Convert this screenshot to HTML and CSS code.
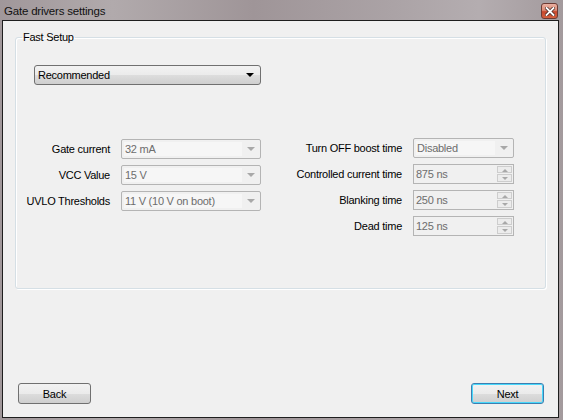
FILE: index.html
```html
<!DOCTYPE html>
<html lang="en">
<head>
<meta charset="UTF-8">
<meta name="viewport" content="width=device-width, initial-scale=1.0">
<title>Gate drivers settings</title>
<link rel="stylesheet" href="styles.css">
</head>
<body>
    <div class="window">
        <div class="titlebar">
            <span class="title">Gate drivers settings</span>
            <span class="close">
                <svg width="10" height="9" viewBox="0 0 10 9">
                    <path d="M1.5 1 L8.5 8 M8.5 1 L1.5 8" stroke="#4a2a24" stroke-width="3.4" stroke-linecap="square"/>
                    <path d="M1.5 1 L8.5 8 M8.5 1 L1.5 8" stroke="#ffffff" stroke-width="1.8" stroke-linecap="square"/>
                </svg>
            </span>
        </div>
        <div class="client">
            <fieldset class="group">
                <legend>Fast Setup</legend>
                <div class="group-body">
                    <div class="select">
                        <span>Recommended</span>
                        <span class="arrow"></span>
                    </div>

                    <div class="fields">
                        <div class="column left">
                            <label>Gate current</label>
                            <div class="combo"><span class="value">32 mA</span><span class="arrow"></span></div>
                            <label>VCC Value</label>
                            <div class="combo"><span class="value">15 V</span><span class="arrow"></span></div>
                            <label>UVLO Thresholds</label>
                            <div class="combo"><span class="value">11 V (10 V on boot)</span><span class="arrow"></span></div>
                        </div>
                        <div class="column right">
                            <label>Turn OFF boost time</label>
                            <div class="combo"><span class="value">Disabled</span><span class="arrow"></span></div>
                            <label>Controlled current time</label>
                            <div class="spin"><span class="value">875 ns</span><span class="spin-btns"><span class="up"></span><span class="down"></span></span></div>
                            <label>Blanking time</label>
                            <div class="spin"><span class="value">250 ns</span><span class="spin-btns"><span class="up"></span><span class="down"></span></span></div>
                            <label>Dead time</label>
                            <div class="spin"><span class="value">125 ns</span><span class="spin-btns"><span class="up"></span><span class="down"></span></span></div>
                        </div>
                    </div>
                </div>
            </fieldset>

            <div class="footer">
                <button class="btn">Back</button>
                <button class="btn default">Next</button>
            </div>
        </div>
    </div>
</body>
</html>
```
FILE: styles.css
```css
body {
    margin: 0;
    padding: 0;
    font-family: "Liberation Sans", Arial, sans-serif;
    font-size: 11px;
    letter-spacing: -0.25px;
    color: #000;
    background: #a79ea1;
}

.window {
    width: 563px;
    height: 420px;
    display: flex;
    flex-direction: column;
    background: linear-gradient(90deg, #a0979a 0%, #b1aaac 20%, #9f9598 45%, #aba3a6 70%, #b4adb0 85%, #a39a9d 100%);
}

.titlebar {
    height: 20px;
    display: flex;
    align-items: center;
    justify-content: space-between;
    padding: 0 5px 0 4px;
}

.title {
    font-size: 11.5px;
    letter-spacing: -0.2px;
    color: #111;
    margin-top: 1px;
}

.close {
    width: 15px;
    height: 14px;
    margin-top: 2px;
    border: 1px solid #6e3b33;
    border-radius: 3px;
    background: linear-gradient(#eab0a2 0%, #dd8a74 45%, #c8472c 55%, #d2603f 100%);
    display: flex;
    align-items: center;
    justify-content: center;
}

.client {
    flex: 1;
    margin: 0 4px 2px 2px;
    border: 1px solid #1e1e1e;
    background: #f0f0f0;
    display: flex;
    flex-direction: column;
}

.group {
    margin: 10px 12px 0 12px;
    padding: 0;
    border: 1px solid #d5dfe5;
    border-radius: 3px;
    box-shadow: inset 1px 1px 0 #fff, 1px 1px 0 #fff;
}

.group legend {
    margin-left: 6px;
    padding: 0 1px;
    line-height: 13px;
}

.group-body {
    box-sizing: border-box;
    height: 244px;
    padding: 21px 18px 0 18px;
}

.select {
    box-sizing: border-box;
    width: 227px;
    height: 20px;
    border: 1px solid #707070;
    border-radius: 3px;
    background: linear-gradient(#f2f2f2 0%, #ebebeb 50%, #dddddd 51%, #cfcfcf 100%);
    display: flex;
    align-items: center;
    justify-content: space-between;
    padding: 0 6px 0 3px;
}

.select .arrow {
    width: 0;
    height: 0;
    border-left: 4px solid transparent;
    border-right: 4px solid transparent;
    border-top: 4px solid #000;
}

.fields {
    display: flex;
    margin: 52px 0 0 -8px;
    gap: 11px;
}

.column {
    display: grid;
    column-gap: 11px;
    row-gap: 5px;
    grid-auto-rows: 21px;
    align-items: center;
}

.left {
    grid-template-columns: 84px 140px;
    margin-top: 1px;
}

.right {
    grid-template-columns: 130px 101px;
}

label {
    justify-self: end;
    white-space: nowrap;
}

.combo, .spin {
    box-sizing: border-box;
    height: 20px;
    border: 1px solid #b4b4b4;
    background: #f0f0f0;
    color: #6d6d6d;
    display: flex;
    align-items: stretch;
}

.combo {
    border-radius: 2px;
}

.combo .value {
    flex: 1;
    margin: 2px 0 2px 2px;
    padding-left: 1px;
    background: #f6f6f6;
    line-height: 14px;
}

.combo .arrow {
    width: 18px;
    position: relative;
}

.combo .arrow::after {
    content: "";
    position: absolute;
    left: 5px;
    top: 7px;
    border-left: 4px solid transparent;
    border-right: 4px solid transparent;
    border-top: 4px solid #a8a8a8;
}

.spin .value {
    flex: 1;
    padding-left: 2px;
    line-height: 18px;
}

.spin-btns {
    width: 15px;
    margin: 1px 1px 1px 0;
    display: flex;
    flex-direction: column;
    gap: 1px;
}

.spin-btns span {
    flex: 1;
    border: 1px solid #cdcdcd;
    background: #ececec;
    position: relative;
}

.spin-btns .up::after,
.spin-btns .down::after {
    content: "";
    position: absolute;
    left: 4px;
    border-left: 3px solid transparent;
    border-right: 3px solid transparent;
}

.spin-btns .up::after {
    top: 2px;
    border-bottom: 3px solid #a8a8a8;
}

.spin-btns .down::after {
    top: 2px;
    border-top: 3px solid #a8a8a8;
}

.footer {
    margin-top: auto;
    display: flex;
    justify-content: space-between;
    padding: 0 14px 13px 15px;
}

.btn {
    box-sizing: border-box;
    width: 73px;
    height: 21px;
    padding: 0;
    border: 1px solid #707070;
    border-radius: 3px;
    background: linear-gradient(#f2f2f2 0%, #ebebeb 50%, #dddddd 51%, #cfcfcf 100%);
    font-family: "Liberation Sans", Arial, sans-serif;
    font-size: 11px;
    letter-spacing: -0.25px;
    color: #000;
}

.btn.default {
    border-color: #3c7fb1;
    box-shadow: inset 0 0 0 1px #48d8fb;
}
```
